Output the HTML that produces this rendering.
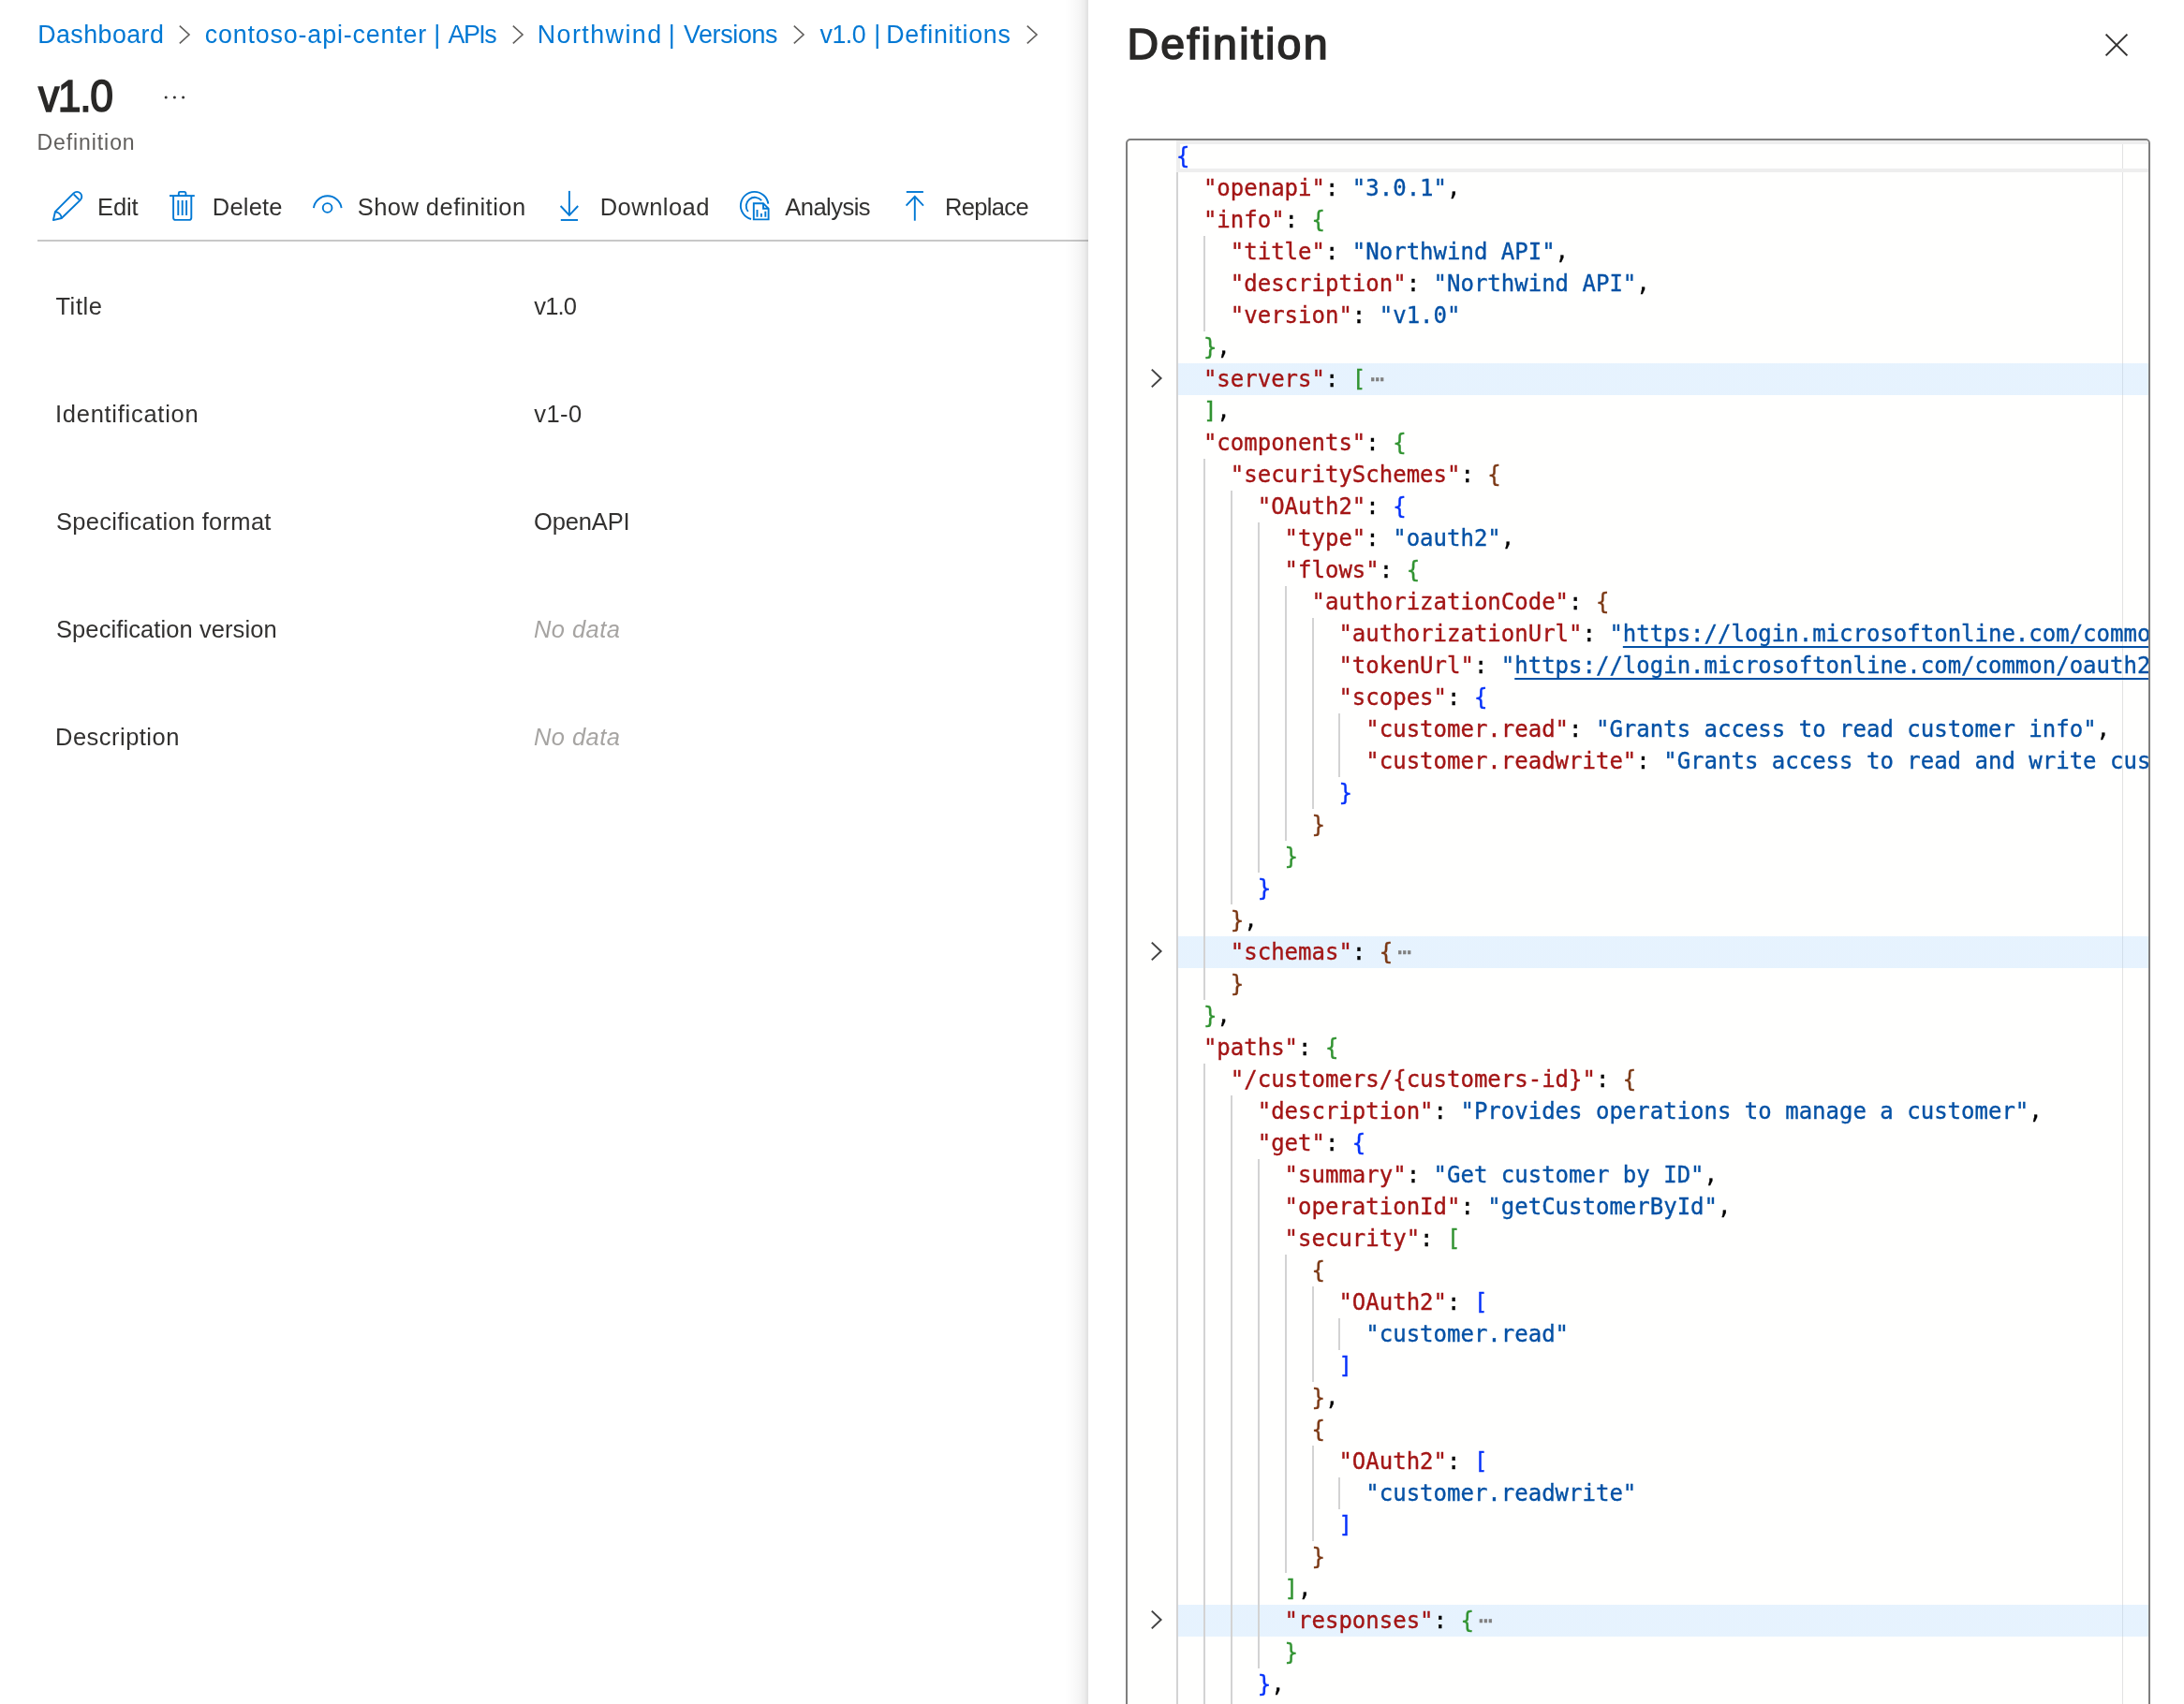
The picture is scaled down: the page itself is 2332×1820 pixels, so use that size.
<!DOCTYPE html>
<html lang="en">
<head>
<meta charset="utf-8">
<title>v1.0 - Definition</title>
<style>
*{box-sizing:border-box;margin:0;padding:0}
html,body{width:2332px;height:1820px;overflow:hidden;background:#fff}
body{position:relative;will-change:transform;font-family:"Liberation Sans",sans-serif;color:#323130}
.t{position:absolute;white-space:nowrap;line-height:1}
.bc{font-size:26px;color:#0078d4;top:20px}
.chev{position:absolute;top:26px}
.h1{font-weight:normal;color:#292827;-webkit-text-stroke:1.6px #292827;font-size:48px;left:40.6px;top:78.9px;letter-spacing:-1.5px;transform:scaleX(.927);transform-origin:0 0}
.sub{font-size:24px;color:#605e5c;left:41px;top:139px}
.tb{font-size:26px;color:#323130;top:206px}
.ic{position:absolute}
.ic *{fill:none;stroke:#0078d4;stroke-width:1.9}
.rule{position:absolute;left:40px;top:256px;width:1122px;height:2px;background:#c8c8c8}
.lab{font-size:26px;color:#323130;left:60px}
.val{font-size:26px;color:#323130;left:570px}
.nd{font-style:italic;color:#a6a4a2}
/* panel */
.panel{position:absolute;left:1162px;top:0;width:1170px;height:1820px;background:#fff}
.shadow{position:absolute;left:1136px;top:0;width:26px;height:1820px;
  background:linear-gradient(to left,rgba(0,0,0,.125) 0,rgba(0,0,0,.07) 4px,rgba(0,0,0,.035) 10px,rgba(0,0,0,.014) 17px,rgba(0,0,0,0) 25px)}
.ph{font-size:48px;font-weight:normal;color:#292827;left:42px;top:23px;-webkit-text-stroke:1.6px #292827}
.close{position:absolute;left:1085px;top:35px}
.ed{position:absolute;left:40px;top:148px;width:1094px;height:1700px;border:2px solid #7e7e7e;border-radius:5px;
  background:#fffffe;overflow:hidden}
.rul{position:absolute;left:1062px;top:0;width:1px;height:1700px;background:#e2e2e2}
.code{position:absolute;left:51px;top:0;width:1100px;height:1700px;
  font-family:"DejaVu Sans Mono","Liberation Mono",monospace;font-size:24px;-webkit-text-stroke:.35px}
.ln{position:absolute;left:0;width:1100px;height:34px;line-height:34px;white-space:pre}
.ln.fold{background:linear-gradient(to right,transparent 1px,rgba(173,214,255,.3) 1px)}
.ln.cur{border:4px solid #eee;line-height:26px;left:1px}
.ln.cur .tx{top:-4px;margin-left:-4px;line-height:34px}
.tx{position:absolute;top:0;margin-left:1px}
.g{position:absolute;top:0;margin-left:1px;width:2px;height:34px;background:#d3d3d3}
.fa{position:absolute;left:-27px;top:5px}
.k{color:#a31515}.s{color:#0451a5}.u{color:#0451a5;text-decoration:underline;text-underline-offset:5px;text-decoration-thickness:2px;text-decoration-skip-ink:none}
.p{color:#000}.b1{color:#0431fa}.b2{color:#319331}.b3{color:#7b3814}
.f{color:#808080;font-size:24px;margin-left:5px}
#bc1{left:40.2px;top:23.8px;font-size:26.8px;letter-spacing:0.45px}
#bc2a{left:218.8px;top:23.8px;font-size:26.8px;letter-spacing:0.85px}
#bc2b{left:463.3px;top:23.8px;font-size:26.8px;letter-spacing:0px}
#bc2c{left:478.6px;top:23.8px;font-size:26.8px;letter-spacing:-1.54px}
#bc3a{left:573.8px;top:23.8px;font-size:26.8px;letter-spacing:1.46px}
#bc3b{left:713.8px;top:23.8px;font-size:26.8px;letter-spacing:0px}
#bc3c{left:729.9px;top:23.8px;font-size:26.8px;letter-spacing:-0.31px}
#bc4a{left:875.5px;top:23.8px;font-size:26.8px;letter-spacing:-0.47px}
#bc4b{left:933.3px;top:23.8px;font-size:26.8px;letter-spacing:0px}
#bc4c{left:946.2px;top:23.8px;font-size:26.8px;letter-spacing:0.76px}
#sub{left:39.4px;top:141.0px;font-size:23px;letter-spacing:0.93px}
#tb1{left:104.1px;top:209.0px;font-size:25.5px;letter-spacing:-0.13px}
#tb2{left:226.8px;top:209.0px;font-size:25.5px;letter-spacing:0.2px}
#tb3{left:381.7px;top:209.0px;font-size:25.5px;letter-spacing:0.46px}
#tb4{left:640.7px;top:209.0px;font-size:25.5px;letter-spacing:0.48px}
#tb5{left:838.3px;top:209.0px;font-size:25.5px;letter-spacing:-0.52px}
#tb6{left:1008.9px;top:209.0px;font-size:25.5px;letter-spacing:-0.63px}
#l1{left:59.4px;top:315.1px;font-size:25.5px;letter-spacing:0.6px}
#l2{left:59.0px;top:430.1px;font-size:25.5px;letter-spacing:0.73px}
#l3{left:60.0px;top:545.1px;font-size:25.5px;letter-spacing:0.29px}
#l4{left:60.0px;top:660.1px;font-size:25.5px;letter-spacing:0.09px}
#l5{left:59.0px;top:775.1px;font-size:25.5px;letter-spacing:0.48px}
#v1{left:570.3px;top:315.1px;font-size:25.5px;letter-spacing:-0.87px}
#v2{left:570.3px;top:430.1px;font-size:25.5px;letter-spacing:0.4px}
#v3{left:570.0px;top:545.1px;font-size:25.5px;letter-spacing:-0.14px}
#v4{left:570.0px;top:660.1px;font-size:25.5px;letter-spacing:0.44px}
#v5{left:570.0px;top:775.1px;font-size:25.5px;letter-spacing:0.44px}
#ph{left:41.4px;top:24.2px;font-size:46.5px;letter-spacing:2.26px}
</style>
</head>
<body>
<!-- breadcrumb -->
<div class="t bc" id="bc1">Dashboard</div>
<svg class="chev" style="left:190px" width="14" height="22" viewBox="0 0 14 22"><path d="M1.8 1.6 L12 11 L1.8 20.4" fill="none" stroke="#605e5c" stroke-width="1.6"/></svg>
<div class="t bc" id="bc2a">contoso-api-center</div><div class="t bc" id="bc2b">|</div><div class="t bc" id="bc2c">APIs</div>
<svg class="chev" style="left:546px" width="14" height="22" viewBox="0 0 14 22"><path d="M1.8 1.6 L12 11 L1.8 20.4" fill="none" stroke="#605e5c" stroke-width="1.6"/></svg>
<div class="t bc" id="bc3a">Northwind</div><div class="t bc" id="bc3b">|</div><div class="t bc" id="bc3c">Versions</div>
<svg class="chev" style="left:846px" width="14" height="22" viewBox="0 0 14 22"><path d="M1.8 1.6 L12 11 L1.8 20.4" fill="none" stroke="#605e5c" stroke-width="1.6"/></svg>
<div class="t bc" id="bc4a">v1.0</div><div class="t bc" id="bc4b">|</div><div class="t bc" id="bc4c">Definitions</div>
<svg class="chev" style="left:1095px" width="14" height="22" viewBox="0 0 14 22"><path d="M1.8 1.6 L12 11 L1.8 20.4" fill="none" stroke="#605e5c" stroke-width="1.6"/></svg>

<!-- title -->
<div class="t h1" id="h1">v1.0</div>
<svg style="position:absolute;left:174px;top:100px" width="26" height="8" viewBox="0 0 26 8"><circle cx="3.2" cy="4" r="1.5" fill="#323130"/><circle cx="12.4" cy="4" r="1.5" fill="#323130"/><circle cx="21.6" cy="4" r="1.5" fill="#323130"/></svg>
<div class="t sub" id="sub">Definition</div>

<!-- toolbar -->
<svg class="ic" style="left:55px;top:203px" width="34" height="34" viewBox="-1 -1 34 34">
  <path d="M0.9 31.1 L2.9 22.2 L22.6 2.4 A5.09 5.09 0 0 1 29.8 9.6 L9.8 29 Z" stroke-linejoin="round"/>
  <path d="M2.9 22.2 A7.5 7.5 0 0 1 9.8 29"/>
  <path d="M22.8 3.6 L28.6 9.4"/>
</svg>
<div class="t tb" id="tb1">Edit</div>

<svg class="ic" style="left:180px;top:203px" width="29" height="34" viewBox="-1 -1 29 34">
  <path d="M0 5.1 H26.8"/>
  <path d="M9.8 5 V2.4 A1.5 1.5 0 0 1 11.3 0.9 H15.9 A1.5 1.5 0 0 1 17.4 2.4 V5"/>
  <path d="M4.1 5.1 V28.4 A2.5 2.5 0 0 0 6.6 30.9 H20.8 A2.5 2.5 0 0 0 23.3 28.4 V5.1"/>
  <path d="M9.3 10.1 V26.1 M13.7 10.1 V26.1 M18.1 10.1 V26.1"/>
</svg>
<div class="t tb" id="tb2">Delete</div>

<svg class="ic" style="left:332px;top:206px" width="36" height="24" viewBox="332 206 36 24">
  <path d="M334.9 222.2 A15 15 0 0 1 364.6 222.2"/>
  <circle cx="349.6" cy="222" r="4.85"/>
</svg>
<div class="t tb" id="tb3">Show definition</div>

<svg class="ic" style="left:596px;top:202px" width="24" height="36" viewBox="596 202 24 36">
  <path d="M607.9 203.9 V229.6"/>
  <path d="M598.6 220 L607.9 229.8 L617.2 220"/>
  <path d="M598.8 235 H617"/>
</svg>
<div class="t tb" id="tb4">Download</div>

<svg class="ic" style="left:788px;top:202px" width="36" height="36" viewBox="788 202 36 36">
  <path d="M802 234 A14.8 14.8 0 1 1 820.3 217.6"/>
  <path d="M798.8 226 A9.2 9.2 0 0 1 813.2 214.2"/>
  <path d="M804.8 217.2 H815 L820.6 222.8 V234.4 H804.8 Z"/>
  <path d="M815 217.2 V222.8 H820.6"/>
  <path d="M808.5 224 V231.8 M812.9 227.9 V231.8 M817.3 225.7 V231.8"/>
</svg>
<div class="t tb" id="tb5">Analysis</div>

<svg class="ic" style="left:965px;top:202px" width="24" height="36" viewBox="965 202 24 36">
  <path d="M967.8 205 H985.9"/>
  <path d="M976.8 210 V235.7"/>
  <path d="M967.6 219.6 L976.8 209.9 L986 219.6"/>
</svg>
<div class="t tb" id="tb6">Replace</div>

<div class="rule"></div>

<!-- properties -->
<div class="t lab" id="l1">Title</div><div class="t val" id="v1">v1.0</div>
<div class="t lab" id="l2">Identification</div><div class="t val" id="v2">v1-0</div>
<div class="t lab" id="l3">Specification format</div><div class="t val" id="v3">OpenAPI</div>
<div class="t lab" id="l4">Specification version</div><div class="t val nd" id="v4">No data</div>
<div class="t lab" id="l5">Description</div><div class="t val nd" id="v5">No data</div>

<!-- panel -->
<div class="shadow"></div>
<div class="panel">
  <div class="t ph" id="ph">Definition</div>
  <svg class="close" width="26" height="26" viewBox="0 0 26 26"><path d="M1.6 1.6 L24.4 24.4 M24.4 1.6 L1.6 24.4" fill="none" stroke="#323130" stroke-width="2"/></svg>
  <div class="ed">
    <div class="rul"></div>
    <div class="code">
<div class="ln cur" style="top:0px"><span class="tx" style="left:0.00px"><span class="b1">{</span></span></div>
<div class="ln" style="top:34px"><i class="g" style="left:0.00px"></i><span class="tx" style="left:28.90px"><span class="k">"openapi"</span><span class="p">: </span><span class="s">"3.0.1"</span><span class="p">,</span></span></div>
<div class="ln" style="top:68px"><i class="g" style="left:0.00px"></i><span class="tx" style="left:28.90px"><span class="k">"info"</span><span class="p">: </span><span class="b2">{</span></span></div>
<div class="ln" style="top:102px"><i class="g" style="left:0.00px"></i><i class="g" style="left:28.90px"></i><span class="tx" style="left:57.80px"><span class="k">"title"</span><span class="p">: </span><span class="s">"Northwind API"</span><span class="p">,</span></span></div>
<div class="ln" style="top:136px"><i class="g" style="left:0.00px"></i><i class="g" style="left:28.90px"></i><span class="tx" style="left:57.80px"><span class="k">"description"</span><span class="p">: </span><span class="s">"Northwind API"</span><span class="p">,</span></span></div>
<div class="ln" style="top:170px"><i class="g" style="left:0.00px"></i><i class="g" style="left:28.90px"></i><span class="tx" style="left:57.80px"><span class="k">"version"</span><span class="p">: </span><span class="s">"v1.0"</span></span></div>
<div class="ln" style="top:204px"><i class="g" style="left:0.00px"></i><span class="tx" style="left:28.90px"><span class="b2">}</span><span class="p">,</span></span></div>
<div class="ln fold" style="top:238px"><svg class="fa" width="14" height="22" viewBox="0 0 14 22"><path d="M1.8 1.6 L11.6 11 L1.8 20.4" fill="none" stroke="#424242" stroke-width="2"/></svg><i class="g" style="left:0.00px"></i><span class="tx" style="left:28.90px"><span class="k">"servers"</span><span class="p">: </span><span class="b2">[</span><span class="f">⋯</span></span></div>
<div class="ln" style="top:272px"><i class="g" style="left:0.00px"></i><span class="tx" style="left:28.90px"><span class="b2">]</span><span class="p">,</span></span></div>
<div class="ln" style="top:306px"><i class="g" style="left:0.00px"></i><span class="tx" style="left:28.90px"><span class="k">"components"</span><span class="p">: </span><span class="b2">{</span></span></div>
<div class="ln" style="top:340px"><i class="g" style="left:0.00px"></i><i class="g" style="left:28.90px"></i><span class="tx" style="left:57.80px"><span class="k">"securitySchemes"</span><span class="p">: </span><span class="b3">{</span></span></div>
<div class="ln" style="top:374px"><i class="g" style="left:0.00px"></i><i class="g" style="left:28.90px"></i><i class="g" style="left:57.80px"></i><span class="tx" style="left:86.70px"><span class="k">"OAuth2"</span><span class="p">: </span><span class="b1">{</span></span></div>
<div class="ln" style="top:408px"><i class="g" style="left:0.00px"></i><i class="g" style="left:28.90px"></i><i class="g" style="left:57.80px"></i><i class="g" style="left:86.70px"></i><span class="tx" style="left:115.60px"><span class="k">"type"</span><span class="p">: </span><span class="s">"oauth2"</span><span class="p">,</span></span></div>
<div class="ln" style="top:442px"><i class="g" style="left:0.00px"></i><i class="g" style="left:28.90px"></i><i class="g" style="left:57.80px"></i><i class="g" style="left:86.70px"></i><span class="tx" style="left:115.60px"><span class="k">"flows"</span><span class="p">: </span><span class="b2">{</span></span></div>
<div class="ln" style="top:476px"><i class="g" style="left:0.00px"></i><i class="g" style="left:28.90px"></i><i class="g" style="left:57.80px"></i><i class="g" style="left:86.70px"></i><i class="g" style="left:115.60px"></i><span class="tx" style="left:144.50px"><span class="k">"authorizationCode"</span><span class="p">: </span><span class="b3">{</span></span></div>
<div class="ln" style="top:510px"><i class="g" style="left:0.00px"></i><i class="g" style="left:28.90px"></i><i class="g" style="left:57.80px"></i><i class="g" style="left:86.70px"></i><i class="g" style="left:115.60px"></i><i class="g" style="left:144.50px"></i><span class="tx" style="left:173.40px"><span class="k">"authorizationUrl"</span><span class="p">: </span><span class="s">"</span><span class="u">https://login.microsoftonline.com/common/oauth2/v2.0/authorize</span><span class="s">"</span><span class="p">,</span></span></div>
<div class="ln" style="top:544px"><i class="g" style="left:0.00px"></i><i class="g" style="left:28.90px"></i><i class="g" style="left:57.80px"></i><i class="g" style="left:86.70px"></i><i class="g" style="left:115.60px"></i><i class="g" style="left:144.50px"></i><span class="tx" style="left:173.40px"><span class="k">"tokenUrl"</span><span class="p">: </span><span class="s">"</span><span class="u">https://login.microsoftonline.com/common/oauth2/v2.0/token</span><span class="s">"</span><span class="p">,</span></span></div>
<div class="ln" style="top:578px"><i class="g" style="left:0.00px"></i><i class="g" style="left:28.90px"></i><i class="g" style="left:57.80px"></i><i class="g" style="left:86.70px"></i><i class="g" style="left:115.60px"></i><i class="g" style="left:144.50px"></i><span class="tx" style="left:173.40px"><span class="k">"scopes"</span><span class="p">: </span><span class="b1">{</span></span></div>
<div class="ln" style="top:612px"><i class="g" style="left:0.00px"></i><i class="g" style="left:28.90px"></i><i class="g" style="left:57.80px"></i><i class="g" style="left:86.70px"></i><i class="g" style="left:115.60px"></i><i class="g" style="left:144.50px"></i><i class="g" style="left:173.40px"></i><span class="tx" style="left:202.30px"><span class="k">"customer.read"</span><span class="p">: </span><span class="s">"Grants access to read customer info"</span><span class="p">,</span></span></div>
<div class="ln" style="top:646px"><i class="g" style="left:0.00px"></i><i class="g" style="left:28.90px"></i><i class="g" style="left:57.80px"></i><i class="g" style="left:86.70px"></i><i class="g" style="left:115.60px"></i><i class="g" style="left:144.50px"></i><i class="g" style="left:173.40px"></i><span class="tx" style="left:202.30px"><span class="k">"customer.readwrite"</span><span class="p">: </span><span class="s">"Grants access to read and write customer info"</span></span></div>
<div class="ln" style="top:680px"><i class="g" style="left:0.00px"></i><i class="g" style="left:28.90px"></i><i class="g" style="left:57.80px"></i><i class="g" style="left:86.70px"></i><i class="g" style="left:115.60px"></i><i class="g" style="left:144.50px"></i><span class="tx" style="left:173.40px"><span class="b1">}</span></span></div>
<div class="ln" style="top:714px"><i class="g" style="left:0.00px"></i><i class="g" style="left:28.90px"></i><i class="g" style="left:57.80px"></i><i class="g" style="left:86.70px"></i><i class="g" style="left:115.60px"></i><span class="tx" style="left:144.50px"><span class="b3">}</span></span></div>
<div class="ln" style="top:748px"><i class="g" style="left:0.00px"></i><i class="g" style="left:28.90px"></i><i class="g" style="left:57.80px"></i><i class="g" style="left:86.70px"></i><span class="tx" style="left:115.60px"><span class="b2">}</span></span></div>
<div class="ln" style="top:782px"><i class="g" style="left:0.00px"></i><i class="g" style="left:28.90px"></i><i class="g" style="left:57.80px"></i><span class="tx" style="left:86.70px"><span class="b1">}</span></span></div>
<div class="ln" style="top:816px"><i class="g" style="left:0.00px"></i><i class="g" style="left:28.90px"></i><span class="tx" style="left:57.80px"><span class="b3">}</span><span class="p">,</span></span></div>
<div class="ln fold" style="top:850px"><svg class="fa" width="14" height="22" viewBox="0 0 14 22"><path d="M1.8 1.6 L11.6 11 L1.8 20.4" fill="none" stroke="#424242" stroke-width="2"/></svg><i class="g" style="left:0.00px"></i><i class="g" style="left:28.90px"></i><span class="tx" style="left:57.80px"><span class="k">"schemas"</span><span class="p">: </span><span class="b3">{</span><span class="f">⋯</span></span></div>
<div class="ln" style="top:884px"><i class="g" style="left:0.00px"></i><i class="g" style="left:28.90px"></i><span class="tx" style="left:57.80px"><span class="b3">}</span></span></div>
<div class="ln" style="top:918px"><i class="g" style="left:0.00px"></i><span class="tx" style="left:28.90px"><span class="b2">}</span><span class="p">,</span></span></div>
<div class="ln" style="top:952px"><i class="g" style="left:0.00px"></i><span class="tx" style="left:28.90px"><span class="k">"paths"</span><span class="p">: </span><span class="b2">{</span></span></div>
<div class="ln" style="top:986px"><i class="g" style="left:0.00px"></i><i class="g" style="left:28.90px"></i><span class="tx" style="left:57.80px"><span class="k">"/customers/{customers-id}"</span><span class="p">: </span><span class="b3">{</span></span></div>
<div class="ln" style="top:1020px"><i class="g" style="left:0.00px"></i><i class="g" style="left:28.90px"></i><i class="g" style="left:57.80px"></i><span class="tx" style="left:86.70px"><span class="k">"description"</span><span class="p">: </span><span class="s">"Provides operations to manage a customer"</span><span class="p">,</span></span></div>
<div class="ln" style="top:1054px"><i class="g" style="left:0.00px"></i><i class="g" style="left:28.90px"></i><i class="g" style="left:57.80px"></i><span class="tx" style="left:86.70px"><span class="k">"get"</span><span class="p">: </span><span class="b1">{</span></span></div>
<div class="ln" style="top:1088px"><i class="g" style="left:0.00px"></i><i class="g" style="left:28.90px"></i><i class="g" style="left:57.80px"></i><i class="g" style="left:86.70px"></i><span class="tx" style="left:115.60px"><span class="k">"summary"</span><span class="p">: </span><span class="s">"Get customer by ID"</span><span class="p">,</span></span></div>
<div class="ln" style="top:1122px"><i class="g" style="left:0.00px"></i><i class="g" style="left:28.90px"></i><i class="g" style="left:57.80px"></i><i class="g" style="left:86.70px"></i><span class="tx" style="left:115.60px"><span class="k">"operationId"</span><span class="p">: </span><span class="s">"getCustomerById"</span><span class="p">,</span></span></div>
<div class="ln" style="top:1156px"><i class="g" style="left:0.00px"></i><i class="g" style="left:28.90px"></i><i class="g" style="left:57.80px"></i><i class="g" style="left:86.70px"></i><span class="tx" style="left:115.60px"><span class="k">"security"</span><span class="p">: </span><span class="b2">[</span></span></div>
<div class="ln" style="top:1190px"><i class="g" style="left:0.00px"></i><i class="g" style="left:28.90px"></i><i class="g" style="left:57.80px"></i><i class="g" style="left:86.70px"></i><i class="g" style="left:115.60px"></i><span class="tx" style="left:144.50px"><span class="b3">{</span></span></div>
<div class="ln" style="top:1224px"><i class="g" style="left:0.00px"></i><i class="g" style="left:28.90px"></i><i class="g" style="left:57.80px"></i><i class="g" style="left:86.70px"></i><i class="g" style="left:115.60px"></i><i class="g" style="left:144.50px"></i><span class="tx" style="left:173.40px"><span class="k">"OAuth2"</span><span class="p">: </span><span class="b1">[</span></span></div>
<div class="ln" style="top:1258px"><i class="g" style="left:0.00px"></i><i class="g" style="left:28.90px"></i><i class="g" style="left:57.80px"></i><i class="g" style="left:86.70px"></i><i class="g" style="left:115.60px"></i><i class="g" style="left:144.50px"></i><i class="g" style="left:173.40px"></i><span class="tx" style="left:202.30px"><span class="s">"customer.read"</span></span></div>
<div class="ln" style="top:1292px"><i class="g" style="left:0.00px"></i><i class="g" style="left:28.90px"></i><i class="g" style="left:57.80px"></i><i class="g" style="left:86.70px"></i><i class="g" style="left:115.60px"></i><i class="g" style="left:144.50px"></i><span class="tx" style="left:173.40px"><span class="b1">]</span></span></div>
<div class="ln" style="top:1326px"><i class="g" style="left:0.00px"></i><i class="g" style="left:28.90px"></i><i class="g" style="left:57.80px"></i><i class="g" style="left:86.70px"></i><i class="g" style="left:115.60px"></i><span class="tx" style="left:144.50px"><span class="b3">}</span><span class="p">,</span></span></div>
<div class="ln" style="top:1360px"><i class="g" style="left:0.00px"></i><i class="g" style="left:28.90px"></i><i class="g" style="left:57.80px"></i><i class="g" style="left:86.70px"></i><i class="g" style="left:115.60px"></i><span class="tx" style="left:144.50px"><span class="b3">{</span></span></div>
<div class="ln" style="top:1394px"><i class="g" style="left:0.00px"></i><i class="g" style="left:28.90px"></i><i class="g" style="left:57.80px"></i><i class="g" style="left:86.70px"></i><i class="g" style="left:115.60px"></i><i class="g" style="left:144.50px"></i><span class="tx" style="left:173.40px"><span class="k">"OAuth2"</span><span class="p">: </span><span class="b1">[</span></span></div>
<div class="ln" style="top:1428px"><i class="g" style="left:0.00px"></i><i class="g" style="left:28.90px"></i><i class="g" style="left:57.80px"></i><i class="g" style="left:86.70px"></i><i class="g" style="left:115.60px"></i><i class="g" style="left:144.50px"></i><i class="g" style="left:173.40px"></i><span class="tx" style="left:202.30px"><span class="s">"customer.readwrite"</span></span></div>
<div class="ln" style="top:1462px"><i class="g" style="left:0.00px"></i><i class="g" style="left:28.90px"></i><i class="g" style="left:57.80px"></i><i class="g" style="left:86.70px"></i><i class="g" style="left:115.60px"></i><i class="g" style="left:144.50px"></i><span class="tx" style="left:173.40px"><span class="b1">]</span></span></div>
<div class="ln" style="top:1496px"><i class="g" style="left:0.00px"></i><i class="g" style="left:28.90px"></i><i class="g" style="left:57.80px"></i><i class="g" style="left:86.70px"></i><i class="g" style="left:115.60px"></i><span class="tx" style="left:144.50px"><span class="b3">}</span></span></div>
<div class="ln" style="top:1530px"><i class="g" style="left:0.00px"></i><i class="g" style="left:28.90px"></i><i class="g" style="left:57.80px"></i><i class="g" style="left:86.70px"></i><span class="tx" style="left:115.60px"><span class="b2">]</span><span class="p">,</span></span></div>
<div class="ln fold" style="top:1564px"><svg class="fa" width="14" height="22" viewBox="0 0 14 22"><path d="M1.8 1.6 L11.6 11 L1.8 20.4" fill="none" stroke="#424242" stroke-width="2"/></svg><i class="g" style="left:0.00px"></i><i class="g" style="left:28.90px"></i><i class="g" style="left:57.80px"></i><i class="g" style="left:86.70px"></i><span class="tx" style="left:115.60px"><span class="k">"responses"</span><span class="p">: </span><span class="b2">{</span><span class="f">⋯</span></span></div>
<div class="ln" style="top:1598px"><i class="g" style="left:0.00px"></i><i class="g" style="left:28.90px"></i><i class="g" style="left:57.80px"></i><i class="g" style="left:86.70px"></i><span class="tx" style="left:115.60px"><span class="b2">}</span></span></div>
<div class="ln" style="top:1632px"><i class="g" style="left:0.00px"></i><i class="g" style="left:28.90px"></i><i class="g" style="left:57.80px"></i><span class="tx" style="left:86.70px"><span class="b1">}</span><span class="p">,</span></span></div>
<div class="ln" style="top:1666px"><i class="g" style="left:0.00px"></i><i class="g" style="left:28.90px"></i><i class="g" style="left:57.80px"></i><span class="tx" style="left:86.70px"><span class="k">"put"</span><span class="p">: </span><span class="b1">{</span></span></div>
    </div>
  </div>
</div>
</body>
</html>
